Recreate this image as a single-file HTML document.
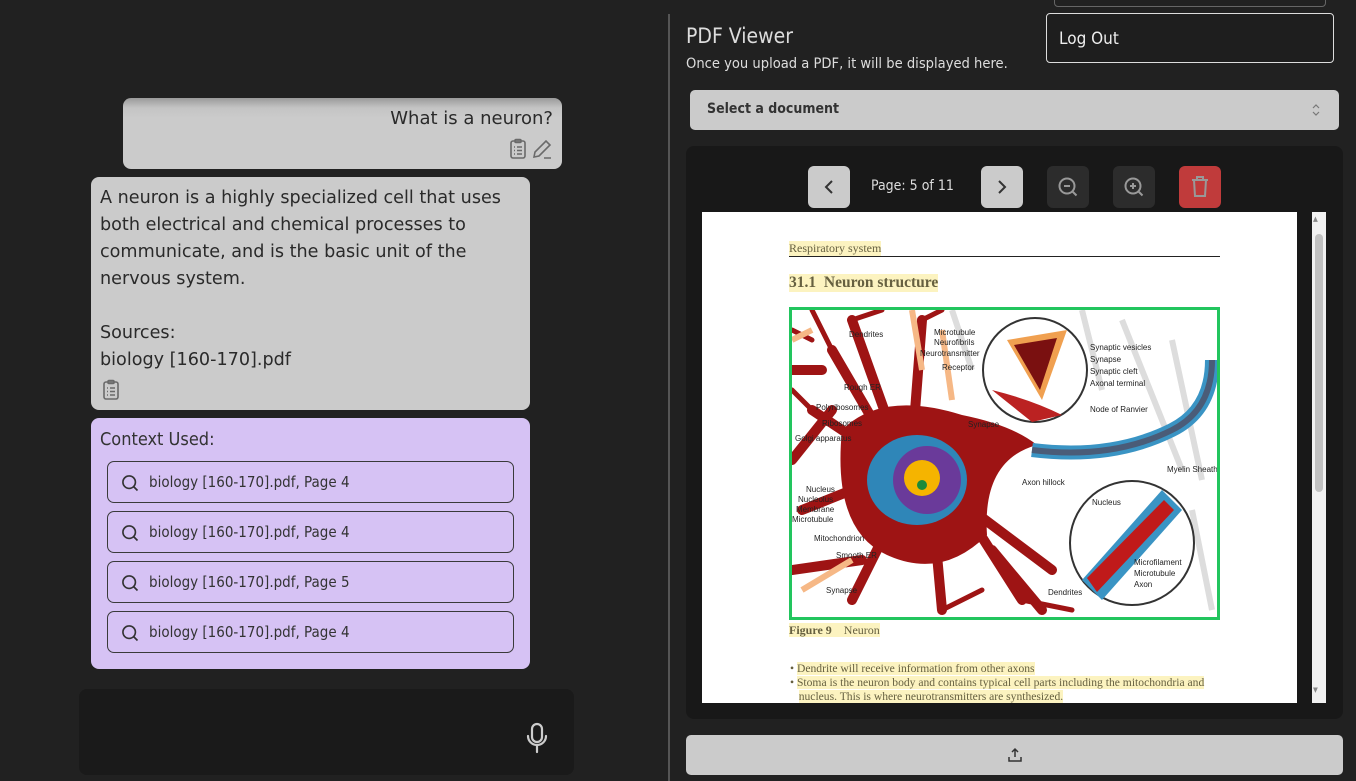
<!DOCTYPE html>
<html><head><meta charset="utf-8"><style>
*{box-sizing:border-box;margin:0;padding:0}
body{width:1356px;height:781px;background:#212121;position:relative;overflow:hidden;font-family:"DejaVu Sans Condensed","DejaVu Sans","Liberation Sans",sans-serif;color:#222}
.abs{position:absolute}
.bub{background:#cbcbcb;border-radius:8px}
.ui{font-family:"DejaVu Sans","Liberation Sans",sans-serif;font-size:17.6px;color:#2a2a2a}
.item{position:absolute;left:16px;width:407px;height:42px;border:1.3px solid #3a3a3a;border-radius:7px;font-size:15px;color:#333}
.item span{position:absolute;left:41px;top:11px}
.item svg{position:absolute;left:12px;top:11px}
.btn{position:absolute;top:166px;width:42px;height:42px;border-radius:6px}
.pdf{font-family:"Liberation Serif",serif;color:#666040}
.hl{background:#fcf3c0}
</style></head><body>
<div class="abs bub" style="left:123px;top:98px;width:439px;height:71px;background:linear-gradient(#9a9a9a 0,#c4c4c4 10px,#cbcbcb 20px)"></div>
<div class="abs ui" style="left:123px;top:108px;width:430px;text-align:right;font-size:18px">What is a neuron?</div>
<svg class="abs" style="left:506px;top:137px" width="24" height="24" viewBox="0 0 24 24" fill="none" stroke="#6a6a6a" stroke-width="1.6"><rect x="5" y="4" width="14" height="17" rx="2"/><rect x="9" y="2.5" width="6" height="3" rx="1"/><path d="M8 10h1M11 10h5M8 13.5h1M11 13.5h5M8 17h1M11 17h5"/></svg>
<svg class="abs" style="left:530px;top:137px" width="24" height="24" viewBox="0 0 24 24" fill="none" stroke="#6a6a6a" stroke-width="1.6"><path d="M4 20l1-5L16 4l4 4L9 19l-5 1zM14 21h7"/></svg>
<div class="abs bub" style="left:91px;top:177px;width:439px;height:233px"></div>
<div class="abs ui" style="left:100px;top:185px;width:420px;line-height:27px">A neuron is a highly specialized cell that uses both electrical and chemical processes to communicate, and is the basic unit of the nervous system.<br><br>Sources:<br>biology [160-170].pdf</div>
<svg class="abs" style="left:99px;top:377px" width="24" height="26" viewBox="0 0 24 24" fill="none" stroke="#6a6a6a" stroke-width="1.6"><rect x="5" y="4" width="14" height="17" rx="2"/><rect x="9" y="2.5" width="6" height="3" rx="1"/><path d="M8 10h1M11 10h5M8 13.5h1M11 13.5h5M8 17h1M11 17h5"/></svg>
<div class="abs" style="left:91px;top:418px;width:439px;height:251px;background:#d6c2f4;border-radius:8px">
<div style="position:absolute;left:9px;top:11px;font-size:18px;color:#333">Context Used:</div>
<div class="item" style="top:43px"><svg width="20" height="20" viewBox="0 0 24 24" fill="none" stroke="#333" stroke-width="2"><circle cx="11" cy="11" r="7.5"/><path d="M16.5 16.5L21 21"/></svg><span>biology [160-170].pdf, Page 4</span></div>
<div class="item" style="top:93px"><svg width="20" height="20" viewBox="0 0 24 24" fill="none" stroke="#333" stroke-width="2"><circle cx="11" cy="11" r="7.5"/><path d="M16.5 16.5L21 21"/></svg><span>biology [160-170].pdf, Page 4</span></div>
<div class="item" style="top:143px"><svg width="20" height="20" viewBox="0 0 24 24" fill="none" stroke="#333" stroke-width="2"><circle cx="11" cy="11" r="7.5"/><path d="M16.5 16.5L21 21"/></svg><span>biology [160-170].pdf, Page 5</span></div>
<div class="item" style="top:193px"><svg width="20" height="20" viewBox="0 0 24 24" fill="none" stroke="#333" stroke-width="2"><circle cx="11" cy="11" r="7.5"/><path d="M16.5 16.5L21 21"/></svg><span>biology [160-170].pdf, Page 4</span></div>
</div>
<div class="abs" style="left:79px;top:689px;width:495px;height:86px;background:#1a1a1a;border-radius:8px"></div>
<svg class="abs" style="left:524px;top:722px" width="26" height="32" viewBox="0 0 26 32" fill="none" stroke="#ccc" stroke-width="2.2" stroke-linecap="round"><rect x="8" y="2" width="10" height="18" rx="5"/><path d="M4 14a9 9 0 0 0 18 0M13 23v7"/></svg>
<div class="abs" style="left:668px;top:14px;width:2px;height:767px;background:#555"></div>
<div class="abs" style="left:686px;top:24px;font-size:21px;color:#ddd">PDF Viewer</div>
<div class="abs" style="left:686px;top:55px;font-size:14.6px;color:#ddd">Once you upload a PDF, it will be displayed here.</div>
<div class="abs" style="left:1054px;top:-10px;width:272px;height:17px;border:1px solid #666;border-radius:4px"></div>
<div class="abs" style="left:1046px;top:13px;width:288px;height:50px;border:1px solid #ddd;border-radius:4px;background:#1e1e1e"><span style="position:absolute;left:12px;top:15px;font-size:17px;color:#eee">Log Out</span></div>
<div class="abs" style="left:690px;top:90px;width:649px;height:40px;background:#cbcbcb;border-radius:5px"><span style="position:absolute;left:17px;top:11px;font-size:14px;font-weight:bold;color:#333">Select a document</span><svg style="position:absolute;right:18px;top:13px" width="10" height="14" viewBox="0 0 10 14" fill="none" stroke="#777" stroke-width="1.2"><path d="M2 5l3-3 3 3M2 9l3 3 3-3"/></svg></div>
<div class="abs" style="left:686px;top:146px;width:657px;height:573px;background:#181818;border-radius:8px"></div>
<div class="btn" style="left:808px;background:#cbcbcb"><svg width="42" height="42" viewBox="0 0 42 42" fill="none" stroke="#333" stroke-width="2"><path d="M24 15l-6 6 6 6"/></svg></div>
<div class="abs" style="left:871px;top:178px;font-size:14px;color:#ddd">Page: 5 of 11</div>
<div class="btn" style="left:981px;background:#cbcbcb"><svg width="42" height="42" viewBox="0 0 42 42" fill="none" stroke="#333" stroke-width="2"><path d="M18 15l6 6-6 6"/></svg></div>
<div class="btn" style="left:1047px;background:#2c2c2c"><svg width="42" height="42" viewBox="0 0 42 42" fill="none" stroke="#999" stroke-width="2"><circle cx="20" cy="20" r="7.5"/><path d="M25.5 25.5l4 4M17 20h6"/></svg></div>
<div class="btn" style="left:1113px;background:#2c2c2c"><svg width="42" height="42" viewBox="0 0 42 42" fill="none" stroke="#999" stroke-width="2"><circle cx="20" cy="20" r="7.5"/><path d="M25.5 25.5l4 4M17 20h6M20 17v6"/></svg></div>
<div class="btn" style="left:1179px;background:#c03b3b"><svg width="42" height="42" viewBox="0 0 42 42" fill="none" stroke="#999" stroke-width="2"><path d="M13 14h16M18 14v-3h6v3M15 14l1 16h10l1-16"/></svg></div>
<div class="abs" style="left:702px;top:212px;width:595px;height:491px;background:#fff;overflow:hidden">
<div class="abs pdf hl" style="left:87px;top:29px;font-size:12px">Respiratory system</div>
<div class="abs" style="left:87px;top:44px;width:431px;height:1px;background:#222"></div>
<div class="abs pdf hl" style="left:87px;top:62px;font-size:15.5px;font-weight:bold">31.1&nbsp; Neuron structure</div>
<div class="abs" style="left:87px;top:95px;width:431px;height:313px;border:3px solid #22c55e;overflow:hidden">
<svg width="425" height="307" viewBox="0 0 425 307">
<g stroke="#ddd" stroke-width="6" fill="none"><path d="M290 0l20 80M330 10l60 150M380 30l30 140M160 0l20 60M400 200l20 100"/></g>
<g stroke="#9e1414" fill="none" stroke-linecap="round">
<path d="M110 160L20 100M110 160L40 40M110 160L10 200M120 170L60 290M140 190L150 300M160 180L230 290M180 200L260 260M120 140L130 10M110 150L60 10M30 60L0 60M40 100L0 150M70 250L0 260M200 240L250 300" stroke-width="10"/>
<path d="M20 100L0 80M40 40L20 0M60 10L90 0M130 10L150 0M230 290L280 300M150 300L190 280M20 30L0 20" stroke-width="5"/>
</g>
<g stroke="#f6b886" stroke-width="6" fill="none"><path d="M130 60L120 0M160 90L150 20M10 280L60 250M0 30L20 20"/></g>
<path d="M50 120Q90 80 170 105Q220 115 245 135Q190 150 195 225Q150 270 95 245Q40 220 50 120Z" fill="#9e1414"/>
<ellipse cx="125" cy="170" rx="50" ry="45" fill="#2f86b8"/>
<ellipse cx="135" cy="170" rx="34" ry="34" fill="#6a3a9a"/>
<circle cx="130" cy="168" r="18" fill="#f5b400"/>
<circle cx="130" cy="175" r="5" fill="#1a8a3a"/>
<path d="M240 140Q320 150 380 120Q420 100 420 50" stroke="#3a94c4" stroke-width="14" fill="none"/>
<path d="M240 140Q320 150 380 120Q420 100 420 50" stroke="#4a5c78" stroke-width="6" fill="none"/>
<circle cx="243" cy="60" r="52" fill="#fff" stroke="#333" stroke-width="2"/>
<path d="M215 30L275 20L250 90Z" fill="#f0a050"/><path d="M222 35L265 28L248 80Z" fill="#7a1010"/>
<path d="M200 80Q240 90 270 105L240 112Z" fill="#b22"/>
<circle cx="340" cy="233" r="62" fill="#fff" stroke="#333" stroke-width="2"/>
<path d="M290 270L370 180L390 200L310 290Z" fill="#3a94c4"/><path d="M295 268L372 190L382 200L305 282Z" fill="#c01a1a"/>
<g font-family="Liberation Sans,sans-serif" font-size="8" fill="#222">
<text x="57" y="27">Dendrites</text><text x="142" y="25">Microtubule</text><text x="142" y="35">Neurofibrils</text><text x="128" y="46">Neurotransmitter</text><text x="150" y="60">Receptor</text>
<text x="298" y="40">Synaptic vesicles</text><text x="298" y="52">Synapse</text><text x="298" y="64">Synaptic cleft</text><text x="298" y="76">Axonal terminal</text><text x="298" y="102">Node of Ranvier</text>
<text x="52" y="80">Rough ER</text><text x="24" y="100">Polyribosomes</text><text x="30" y="116">Ribosomes</text><text x="3" y="131">Golgi apparatus</text>
<text x="14" y="182">Nucleus</text><text x="6" y="192">Nucleolus</text><text x="4" y="202">Membrane</text><text x="0" y="212">Microtubule</text><text x="22" y="231">Mitochondrion</text><text x="44" y="248">Smooth ER</text><text x="34" y="283">Synapse</text>
<text x="230" y="175">Axon hillock</text><text x="375" y="162">Myelin Sheath</text><text x="300" y="195">Nucleus</text><text x="342" y="255">Microfilament</text><text x="342" y="266">Microtubule</text><text x="342" y="277">Axon</text><text x="256" y="285">Dendrites</text><text x="176" y="117">Synapse</text>
</g>
</svg></div>
<div class="abs pdf" style="left:87px;top:411px;font-size:12px"><span class="hl"><b>Figure 9</b>&nbsp;&nbsp;&nbsp;&nbsp;Neuron</span></div>
<div class="abs pdf" style="left:88px;top:450px;font-size:11.6px;line-height:14px;width:460px">•&nbsp;<span class="hl">Dendrite will receive information from other axons</span><br>•&nbsp;<span class="hl">Stoma is the neuron body and contains typical cell parts including the mitochondria and</span><br>&nbsp;&nbsp;&nbsp;<span class="hl">nucleus. This is where neurotransmitters are synthesized.</span></div>
</div>
<div class="abs" style="left:1312px;top:212px;width:14px;height:491px;background:#f1f1f1"></div>
<div class="abs" style="left:1315px;top:234px;width:8px;height:258px;background:#c1c1c1;border-radius:4px"></div>
<div class="abs" style="left:1313px;top:215px;font-size:7px;color:#888">▲</div>
<div class="abs" style="left:1313px;top:686px;font-size:7px;color:#888">▼</div>
<div class="abs" style="left:686px;top:735px;width:657px;height:40px;background:#cbcbcb;border-radius:5px"><svg style="position:absolute;left:321px;top:12px" width="16" height="16" viewBox="0 0 16 16" fill="none" stroke="#333" stroke-width="1.5"><path d="M8 10V2M5 5l3-3 3 3M2 10v4h12v-4"/></svg></div>
</body></html>
